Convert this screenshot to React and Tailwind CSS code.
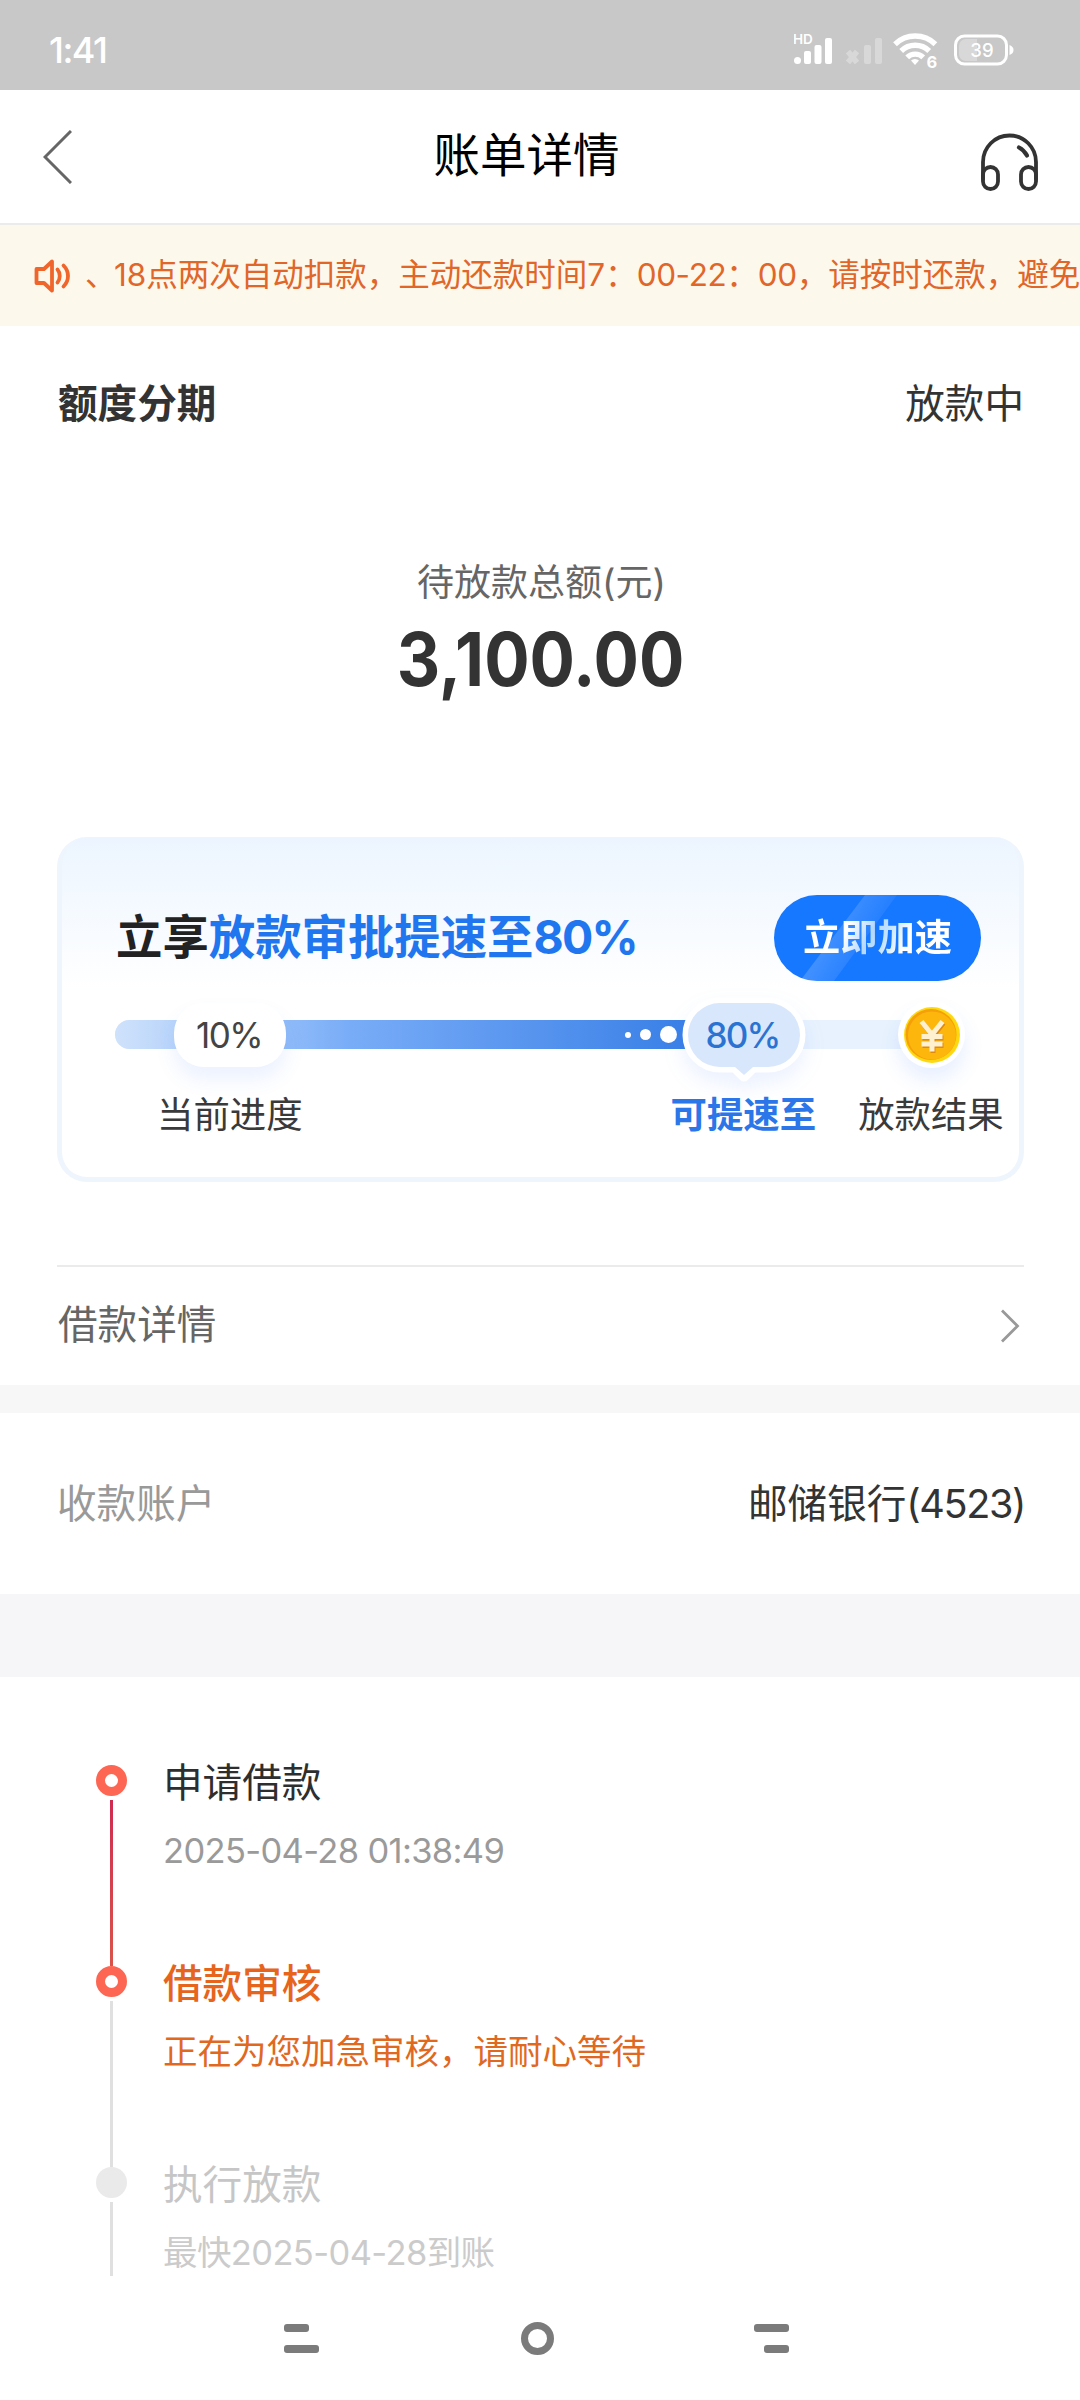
import clsx from 'clsx'

// ── Status bar ─────────────────────────────────────────────────────────────────
const SignalIcon = () => (
  <svg width="38" height="34" viewBox="0 0 38 34" fill="#fff">
    <text x="-1" y="13" fontSize="13.500" fontWeight="600" fontFamily="Inter">HD</text>
    <circle cx="3.5" cy="29.5" r="3.5" />
    <rect x="10" y="20" width="7" height="13" rx="2" />
    <rect x="20.5" y="14" width="7" height="19" rx="2" />
    <rect x="31" y="7" width="7" height="26" rx="2" />
  </svg>
)

const NoSignalIcon = () => (
  <svg width="36" height="34" viewBox="0 0 36 34" fill="#fff" opacity="0.3">
    <path d="M2 20.500l9 11M11 20.500l-9 11" stroke="#fff" strokeWidth="5.500" />
    <rect x="18" y="14" width="7" height="19" rx="2" />
    <rect x="29" y="7" width="7" height="26" rx="2" />
  </svg>
)

const WifiIcon = () => (
  <svg width="46" height="50" viewBox="0 -6 46 50" fill="none" stroke="#fff" strokeWidth="5.4">
    <path d="M2 13.200a29 29 0 0 1 40.4 0" />
    <path d="M8.200 20a20 20 0 0 1 28 0" />
    <path d="M14.200 26.400a11.500 11.500 0 0 1 16 0" />
    <path d="M18 29.600a5.6 5.6 0 0 1 8 0L22 34z" fill="#fff" stroke="none" />
    <text x="33.500" y="36.500" fontSize="16.500" fontWeight="700" fontFamily="Inter" fill="#fff" stroke="none">6</text>
  </svg>
)

const BatteryIcon = () => (
  <svg width="61" height="32" viewBox="0 0 61 32">
    <path d="M12 5h11v22H12a7 7 0 0 1-7-7v-8a7 7 0 0 1 7-7z" fill="#fff" opacity="0.3" />
    <rect x="1.5" y="2" width="51" height="28" rx="9" fill="none" stroke="#fff" strokeWidth="3" />
    <path d="M55.500 11c3 1 4 3 4 5s-1 4-4 5z" fill="#fff" />
    <text x="28" y="22.500" textAnchor="middle" fontSize="18.500" fontWeight="500" fontFamily="Inter" fill="#fff">39</text>
  </svg>
)

const StatusBar = () => (
  <div className="h-[90px] bg-[#c8c8c8] flex items-center pl-[49px] pr-[65px] pt-[9px]">
    <span className="text-[36px] leading-[36px] font-medium tracking-[-1.5px] text-white">1:41</span>
    <div className="ml-auto flex items-center">
      <div className="-mt-[3px]"><SignalIcon /></div>
      <div className="ml-[14px] -mt-[3px]"><NoSignalIcon /></div>
      <div className="ml-[11px]"><WifiIcon /></div>
      <div className="ml-[15px]"><BatteryIcon /></div>
    </div>
  </div>
)

// ── Header ─────────────────────────────────────────────────────────────────────
const Header = () => (
  <header className="h-[135px] border-b-2 border-[#ebebeb] flex items-center justify-between pl-[43px] pr-[42px]">
    <svg width="29" height="54" viewBox="0 0 29 54" fill="none" stroke="#666" strokeWidth="3">
      <path d="M28 1L2 27l26 26" />
    </svg>
    <h1 className="text-[46.500px] leading-[50px] text-black -mt-1">账单详情</h1>
    <svg className="mt-[11px]" width="57" height="58" viewBox="0 0 57 58" fill="none" stroke="#333" strokeWidth="3.800" strokeLinecap="round">
      <path d="M2 46V29a26.500 26.500 0 0 1 53 0v17" />
      <rect x="2" y="34" width="15" height="22" rx="7.500" />
      <rect x="40" y="34" width="15" height="22" rx="7.500" />
      <path d="M38 14.500c3.500 1.800 6 4.400 8 8" strokeWidth="4.200" />
    </svg>
  </header>
)

const NoticeBar = () => (
  <div className="h-[101px] bg-[#fdf8ec] flex items-center pl-[34px] overflow-hidden text-[#e0662a]">
    <svg className="shrink-0" width="37" height="36" viewBox="0 0 37 36" fill="none" stroke="#f0652b" strokeWidth="3.800">
      <path d="M2.500 11h7.500l8-7.500v29L10 25H2.500z" strokeLinejoin="round" />
      <path d="M23.500 11.500c3 3.500 3 9.500 0 13" strokeLinecap="round" />
      <path d="M29.500 7.500c6 6 6 15 0 21" strokeLinecap="round" />
    </svg>
    <p className="ml-[14px] text-[31.500px] leading-[40px] whitespace-nowrap -mt-[2px]">
      <span className="tracking-[-2.5px]">、</span>18点两次自动扣款，主动还款时间7：
      <span className="tracking-[-0.4px]">00-22</span>：<span className="tracking-[-0.4px]">00</span>，请按时还款，避免
    </p>
  </div>
)

// ── Speed-up card ──────────────────────────────────────────────────────────────
const CoinIcon = () => (
  <svg width="58" height="58" viewBox="0 0 58 58">
    <circle cx="29" cy="29" r="28" fill="#ffd910" />
    <circle cx="28" cy="28.500" r="25.500" fill="#f59f0a" />
    <circle cx="29" cy="29.500" r="24" fill="#fdb60c" />
    <path d="M18.500 15.500L29 28.500l10.500-13M29 28v17.500M18.500 30.500h21M18.500 38h21" fill="none" stroke="#e08a10" strokeWidth="5" transform="translate(1 1.500)" />
    <path d="M18.500 15.500L29 28.500l10.500-13M29 28v17.500M18.500 30.500h21M18.500 38h21" fill="none" stroke="#fff0cf" strokeWidth="5" />
  </svg>
)

const ProgressTrack = () => (
  <div className="relative mt-[39px] ml-[53px] w-[826px] h-[29px] rounded-full bg-[#e8f2fe]">
    <div className="w-[590px] h-full rounded-l-full bg-linear-to-r from-[#cfe2fb] via-[#78acf7] via-40% to-[#357de6]" />

    {/* current progress */}
    <div className="absolute left-[59px] -top-[17px] w-[112px] h-[64px] rounded-[30px] bg-white shadow-[0_12px_20px_rgba(60,120,255,0.1)] flex items-center justify-center text-[35px] leading-none text-[#444] tracking-[-1.5px] pr-[2px]">
      10%
    </div>

    {/* leading dots */}
    <div className="absolute left-[510px] top-[6px] h-[17px] flex items-center gap-[9px]">
      <i className="size-[6px] rounded-full bg-white" />
      <i className="size-[11px] rounded-full bg-white" />
      <i className="size-[17px] rounded-full bg-white" />
    </div>

    {/* target bubble */}
    <div className="absolute left-[567px] -top-[23px]">
      <svg className="drop-shadow-[0_10px_10px_rgba(60,120,255,0.1)]" width="124" height="88" viewBox="0 0 124 88">
        <path d="M38 6h48a32 32 0 0 1 0 64h-15l-9 9-9-9H38a32 32 0 0 1 0-64z" fill="#fff" stroke="#fff" strokeWidth="11" strokeLinejoin="round" />
        <path d="M38 6h48a32 32 0 0 1 0 64h-15l-9 8-9-8H38a32 32 0 0 1 0-64z" fill="#d8e7fc" />
      </svg>
      <span className="absolute inset-x-0 top-[6px] h-[64px] flex items-center justify-center text-[35px] leading-none font-medium text-[#2b73d2] tracking-[-1.8px] pr-[3px]">
        80%
      </span>
    </div>

    {/* result coin */}
    <div className="absolute left-[783px] -top-[19px] size-[67px] rounded-full bg-white shadow-[0_12px_20px_rgba(60,120,255,0.12)] flex items-center justify-center">
      <CoinIcon />
    </div>
  </div>
)

const SpeedCard = () => (
  <div className="mt-[138px] h-[345px] rounded-[30px] border-[5px] border-t-0 border-[#eef5fd] bg-linear-to-b from-[#ecf5ff] to-white to-45% pt-[58px]">
    <div className="flex items-center justify-between pl-[54px] pr-[38px]">
      <p className="text-[46.400px] leading-[60px] font-bold text-[#222] whitespace-nowrap -mt-[2px]">
        立享<span className="text-[#1f76ee]">放款审批提速至<span className="tracking-[-1.8px]">80%</span></span>
      </p>
      <button className="relative w-[207px] h-[86px] rounded-full bg-[#1677ff] overflow-hidden">
        <svg className="absolute inset-0" width="207" height="86">
          <defs>
            <linearGradient id="sheen" x1="0" x2="1" y1="0" y2="0.5">
              <stop offset="0.2" stopColor="#fff" stopOpacity="0.26" />
              <stop offset="0.8" stopColor="#fff" stopOpacity="0.06" />
            </linearGradient>
          </defs>
          <path d="M91 0h32L60 86H26z" fill="url(#sheen)" />
        </svg>
        <span className="relative text-[37.300px] leading-[86px] font-bold text-transparent bg-clip-text bg-linear-[115deg,#fff_30%,#b4d8ff_45%,#c4e4ff_55%,#fff_68%]">
          立即加速
        </span>
      </button>
    </div>
    <ProgressTrack />
    <div className="flex mt-[46px] pl-[95px] text-[36.400px] leading-[40px] text-[#3a3a3a] whitespace-nowrap">
      <span>当前进度</span>
      <span className="ml-[368px] font-bold text-[#2b76e8]">可提速至</span>
      <span className="ml-[42px]">放款结果</span>
    </div>
  </div>
)

// ── Loan progress timeline ─────────────────────────────────────────────────────
const steps = [
  { title: '申请借款', desc: '2025-04-28 01:38:49', state: 'done' },
  { title: '借款审核', desc: '正在为您加急审核，请耐心等待', state: 'active' },
  { title: '执行放款', desc: '最快2025-04-28到账', state: 'pending' },
]

const Step = ({ title, desc, state }) => (
  <li className={clsx('flex', state === 'pending' ? 'h-[109px]' : 'h-[201px]')}>
    <div className="w-[31px] flex flex-col items-center">
      <i
        className={clsx(
          'size-[31px] shrink-0 rounded-full',
          state === 'pending' ? 'bg-[#eaeaea]' : 'border-[9px] border-[#fd6652] bg-white'
        )}
      />
      <i
        className={clsx(
          'mt-[4px] w-[3px] flex-1',
          state === 'done' ? 'bg-linear-to-b from-[#cf2a50] to-[#d9534a]' : 'bg-[#e0e0e0]'
        )}
      />
    </div>
    <div className="ml-[36px] pt-[2px]">
      <p
        className={clsx(
          'text-[39.600px] leading-[32px]',
          state === 'done' && 'text-[#2e2e2e]',
          state === 'active' && 'text-[#e6641c] font-medium',
          state === 'pending' && 'text-[#c6c6c6]'
        )}
      >
        {title}
      </p>
      <p
        className={clsx(
          'mt-[32px] text-[34.500px] leading-[40px]',
          state === 'done' && 'text-[#9a9a9a] tracking-[-0.65px]',
          state === 'active' && 'text-[#e0691f]',
          state === 'pending' && 'text-[#cbcbcb] tracking-[-0.6px]'
        )}
      >
        {desc}
      </p>
    </div>
  </li>
)

const NavBar = () => (
  <nav className="h-[124px] flex items-center pl-[284px]">
    <div className="w-[35px] flex flex-col gap-[13px]">
      <i className="h-[8px] w-[25px] rounded-[3px] bg-[#7b7b7b]" />
      <i className="h-[8px] w-full rounded-[3px] bg-[#7b7b7b]" />
    </div>
    <i className="ml-[202px] size-[33px] rounded-full border-[7px] border-[#7b7b7b]" />
    <div className="ml-[200px] w-[35px] flex flex-col items-end gap-[13px]">
      <i className="h-[8px] w-full rounded-[3px] bg-[#7b7b7b]" />
      <i className="h-[8px] w-[25px] rounded-[3px] bg-[#7b7b7b]" />
    </div>
  </nav>
)

// ── Main App ───────────────────────────────────────────────────────────────────
export default function App() {
  return (
    <div className="w-[1080px] h-[2400px] overflow-hidden bg-white text-[#333] font-['Inter','Noto_Sans_CJK_SC',sans-serif]">
      <StatusBar />
      <Header />
      <NoticeBar />

      <section className="h-[1059px] pt-[58px] pl-[57px] pr-[56px]">
        <div className="flex justify-between text-[39.600px] leading-[40px] pl-px">
          <h2 className="font-bold">额度分期</h2>
          <span>放款中</span>
        </div>
        <p className="mt-[139px] text-center text-[37px] leading-[40px] text-[#666] pl-[2px]">待放款总额(元)</p>
        <p className="mt-[16px] text-center text-[74px] leading-[80px] font-bold scale-x-[0.91]">3,100.00</p>
        <SpeedCard />
        <div className="mt-[83px] h-[120px] border-t-2 border-[#ebebeb] flex items-center justify-between pl-px pr-[4px]">
          <span className="text-[39.600px] leading-[40px] text-[#666] -mt-[2px]">借款详情</span>
          <svg width="20" height="34" viewBox="0 0 20 34" fill="none" stroke="#999" strokeWidth="2.800">
            <path d="M2 1.500L17.500 17 2 32.500" />
          </svg>
        </div>
      </section>

      <div className="h-[28px] bg-[#f7f7f8]" />
      <section className="h-[181px] pl-[57px] pr-[55px] flex items-center justify-between text-[39.600px] leading-[40px]">
        <span className="text-[#999]">收款账户</span>
        <span>邮储银行<span className="tracking-[-1.4px]">(4523)</span></span>
      </section>
      <div className="h-[83px] bg-[#f6f6f8]" />

      <ul className="pt-[88px] pl-[96px]">
        {steps.map((step) => (
          <Step key={step.title} {...step} />
        ))}
      </ul>
      <NavBar />
    </div>
  )
}
